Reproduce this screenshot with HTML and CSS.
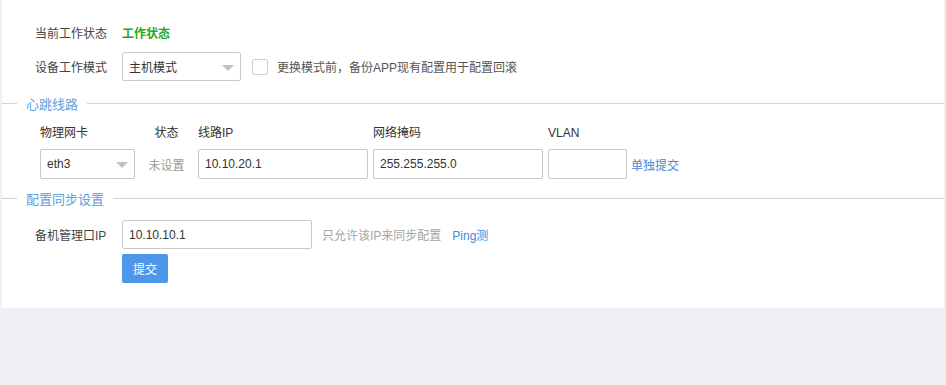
FILE: index.html
```html
<!DOCTYPE html>
<html lang="zh-CN">
<head>
  <meta charset="UTF-8">
  <title>双机热备</title>
  <link rel="stylesheet" href="styles.css">
</head>
<body>
  <div class="panel">
    <div class="form-row row-status">
      <span class="label">当前工作状态</span>
      <span class="state-ok">工作状态</span>
    </div>
    <div class="form-row row-mode">
      <span class="label">设备工作模式</span>
      <div class="select select-mode">主机模式<i class="arrow"></i></div>
      <span class="checkbox"></span>
      <span class="check-text">更换模式前，备份APP现有配置用于配置回滚</span>
    </div>

    <div class="section-title"><span>心跳线路</span></div>
    <div class="hb-grid">
      <div class="hb-head">物理网卡</div>
      <div class="hb-head center">状态</div>
      <div class="hb-head">线路IP</div>
      <div class="hb-head">网络掩码</div>
      <div class="hb-head">VLAN</div>
      <div></div>

      <div class="select select-nic">eth3<i class="arrow"></i></div>
      <div class="hb-state">未设置</div>
      <div><input class="text-input w170" type="text" value="10.10.20.1"></div>
      <div><input class="text-input w170" type="text" value="255.255.255.0"></div>
      <div><input class="text-input w79" type="text" value=""></div>
      <a class="link" href="#">单独提交</a>
    </div>

    <div class="section-title sync"><span>配置同步设置</span></div>
    <div class="form-row row-backup">
      <span class="label">备机管理口IP</span>
      <input class="text-input w190" type="text" value="10.10.10.1">
      <span class="hint">只允许该IP来同步配置</span>
      <a class="link" href="#">Ping测</a>
    </div>
    <button class="btn-submit" type="button">提交</button>
  </div>
</body>
</html>
```

FILE: styles.css
```css
* {
  margin: 0;
  padding: 0;
  box-sizing: border-box;
}

body {
  background-color: #eff0f4;
  font-family: "Liberation Sans", Arial, "Noto Sans CJK SC", sans-serif;
  font-size: 12px;
  color: #333;
}

.panel {
  margin-left: 2px;
  width: 942px;
  height: 308px;
  background-color: #fff;
  padding-top: 17px;
}

.form-row {
  display: flex;
  align-items: center;
  padding-left: 33px;
}

.label {
  width: 87px;
  color: #444;
}

.row-status {
  height: 30px;
}

.state-ok {
  color: #1cab1a;
  font-weight: bold;
}

.row-mode {
  margin-top: 5px;
  height: 29px;
}

.select {
  position: relative;
  display: flex;
  align-items: center;
  height: 29px;
  padding-left: 6px;
  border: 1px solid #c9c9c9;
  border-radius: 2px;
  color: #333;
  background: #fff;
}

.select-mode {
  width: 119px;
}

.select-nic {
  width: 95px;
  height: 30px;
}

.arrow {
  position: absolute;
  right: 6px;
  top: 50%;
  margin-top: -2px;
  border-left: 6px solid transparent;
  border-right: 6px solid transparent;
  border-top: 6px solid #c2c2c2;
}

.checkbox {
  width: 16px;
  height: 16px;
  margin-left: 11px;
  border: 1px solid #cfcfcf;
  border-radius: 2px;
}

.check-text {
  margin-left: 9px;
  color: #555;
}

.section-title {
  display: flex;
  align-items: center;
  height: 20px;
  margin-top: 12px;
  color: #5d9ee0;
  font-size: 13px;
}

.section-title::before {
  content: "";
  width: 15px;
  border-top: 1px solid #cdd3dc;
}

.section-title::after {
  content: "";
  flex: 1;
  border-top: 1px solid #cdd3dc;
}

.section-title span {
  padding: 0 9px 0 9px;
}

.section-title.sync {
  margin-top: 9px;
}

.hb-grid {
  display: grid;
  grid-template-columns: 95px 63px 175px 175px 83px auto;
  grid-template-rows: 20px 30px;
  row-gap: 6px;
  align-items: center;
  margin-top: 10px;
  padding-left: 38px;
}

.hb-head {
  color: #333;
  line-height: 20px;
}

.center,
.hb-state {
  text-align: center;
}

.hb-state {
  color: #999;
}

.text-input {
  height: 30px;
  padding: 0 6px;
  border: 1px solid #c9c9c9;
  border-radius: 2px;
  font-family: inherit;
  font-size: 12px;
  color: #333;
  outline: none;
}

.w170 {
  width: 170px;
  display: block;
}

.w79 {
  width: 79px;
  display: block;
}

.w190 {
  width: 190px;
  height: 29px;
}

.link {
  color: #3f8ad8;
  text-decoration: none;
}

.row-backup {
  margin-top: 12px;
}

.hint {
  margin-left: 10px;
  color: #a5a5a5;
}

.row-backup .link {
  margin-left: 11px;
}

.btn-submit {
  display: block;
  margin: 5px 0 0 120px;
  width: 46px;
  height: 29px;
  border: none;
  border-radius: 2px;
  background-color: #4d97ea;
  color: #fff;
  font-family: inherit;
  font-size: 12px;
}
```
